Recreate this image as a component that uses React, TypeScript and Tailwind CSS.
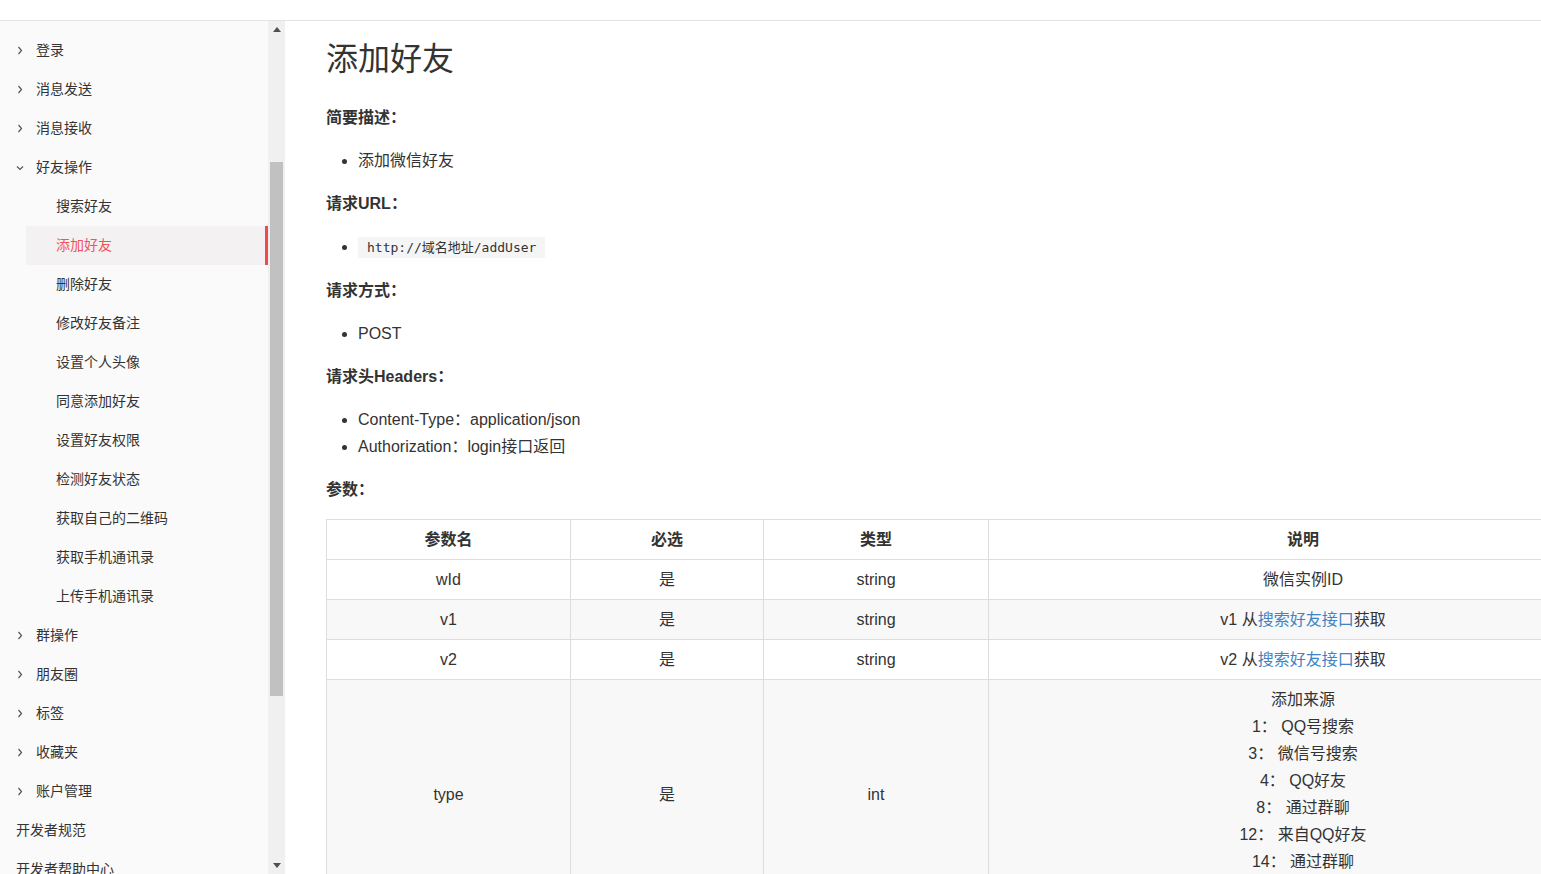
const FONT = { fontFamily: '"Liberation Sans", "Noto Sans CJK SC", sans-serif' };

type NavItem = { label: string; kind: "group" | "open" | "sub" | "active" | "leaf" };

const NAV: NavItem[] = [
  { label: "登录", kind: "group" },
  { label: "消息发送", kind: "group" },
  { label: "消息接收", kind: "group" },
  { label: "好友操作", kind: "open" },
  { label: "搜索好友", kind: "sub" },
  { label: "添加好友", kind: "active" },
  { label: "删除好友", kind: "sub" },
  { label: "修改好友备注", kind: "sub" },
  { label: "设置个人头像", kind: "sub" },
  { label: "同意添加好友", kind: "sub" },
  { label: "设置好友权限", kind: "sub" },
  { label: "检测好友状态", kind: "sub" },
  { label: "获取自己的二维码", kind: "sub" },
  { label: "获取手机通讯录", kind: "sub" },
  { label: "上传手机通讯录", kind: "sub" },
  { label: "群操作", kind: "group" },
  { label: "朋友圈", kind: "group" },
  { label: "标签", kind: "group" },
  { label: "收藏夹", kind: "group" },
  { label: "账户管理", kind: "group" },
  { label: "开发者规范", kind: "leaf" },
  { label: "开发者帮助中心", kind: "leaf" },
];

const Caret = ({ open }: { open: boolean }) =>
  open ? (
    <svg width="8" height="6" viewBox="0 0 8 6">
      <polyline points="1,1.5 4,4.5 7,1.5" fill="none" stroke="#555" strokeWidth="1.2" />
    </svg>
  ) : (
    <svg width="6" height="9" viewBox="0 0 6 9">
      <polyline points="1.5,1 4.5,4.5 1.5,8" fill="none" stroke="#555" strokeWidth="1.2" />
    </svg>
  );

const NavRow = ({ item }: { item: NavItem }) => {
  if (item.kind === "sub" || item.kind === "active") {
    const active = item.kind === "active";
    return (
      <div
        className={
          active
            ? "ml-[26px] flex h-[39px] items-center border-r-[3px] border-[#f04a4f] bg-[#f3f1f1] pl-[30px] text-[#f2545b]"
            : "ml-[26px] flex h-[39px] items-center pl-[30px] text-[#333]"
        }
      >
        {item.label}
      </div>
    );
  }
  if (item.kind === "leaf") {
    return <div className="flex h-[39px] items-center whitespace-nowrap pl-[16px] text-[#333]">{item.label}</div>;
  }
  return (
    <div className="flex h-[39px] items-center pl-[15px] text-[#333]">
      <span className="mr-[11px] flex w-[10px] justify-center">
        <Caret open={item.kind === "open"} />
      </span>
      {item.label}
    </div>
  );
};

const Sidebar = () => (
  <aside className="flex h-full w-[285px] shrink-0">
    <nav className="w-[268px] overflow-hidden bg-[#fafafa] pt-[10px] text-[14px]">
      {NAV.map((item) => (
        <NavRow key={item.label} item={item} />
      ))}
    </nav>
    {/* fake scrollbar */}
    <div className="flex w-[17px] flex-col items-center bg-[#f0f0f0]">
      <div className="flex h-[17px] items-center justify-center">
        <svg width="8" height="5" viewBox="0 0 8 5">
          <path d="M0 5 L4 0 L8 5 Z" fill="#505050" />
        </svg>
      </div>
      <div className="mt-[124px] h-[534px] w-[13px] bg-[#c1c1c1]" />
      <div className="flex-1" />
      <div className="flex h-[17px] items-center justify-center">
        <svg width="8" height="5" viewBox="0 0 8 5">
          <path d="M0 0 L4 5 L8 0 Z" fill="#505050" />
        </svg>
      </div>
    </div>
  </aside>
);

const Heading = ({ children }: { children: React.ReactNode }) => (
  <p className="text-[16px] font-bold leading-[27px] text-[#333]">{children}</p>
);

const Bullets = ({ children }: { children: React.ReactNode }) => (
  <ul className="my-[16px] list-disc pl-[32px] text-[16px] leading-[27px] text-[#333]">{children}</ul>
);

const Link = ({ children }: { children: React.ReactNode }) => (
  <span className="text-[#4183c4]">{children}</span>
);

const SOURCES = ["添加来源", "1： QQ号搜索", "3： 微信号搜索", "4： QQ好友", "8： 通过群聊", "12： 来自QQ好友", "14： 通过群聊"];

const cell = "border border-[#ddd] px-[13px] py-[6px] text-center align-middle leading-[27px]";

const ParamTable = () => (
  <table className="w-[1292px] table-fixed border-collapse text-[16px] text-[#333]">
    <colgroup>
      <col className="w-[244px]" />
      <col className="w-[193px]" />
      <col className="w-[225px]" />
      <col />
    </colgroup>
    <thead>
      <tr>
        <th className={cell + " font-bold"}>参数名</th>
        <th className={cell + " font-bold"}>必选</th>
        <th className={cell + " font-bold"}>类型</th>
        <th className={cell + " font-bold"}>说明</th>
      </tr>
    </thead>
    <tbody>
      <tr>
        <td className={cell}>wId</td>
        <td className={cell}>是</td>
        <td className={cell}>string</td>
        <td className={cell}>微信实例ID</td>
      </tr>
      <tr className="bg-[#f8f8f8]">
        <td className={cell}>v1</td>
        <td className={cell}>是</td>
        <td className={cell}>string</td>
        <td className={cell}>
          v1 从<Link>搜索好友接口</Link>获取
        </td>
      </tr>
      <tr>
        <td className={cell}>v2</td>
        <td className={cell}>是</td>
        <td className={cell}>string</td>
        <td className={cell}>
          v2 从<Link>搜索好友接口</Link>获取
        </td>
      </tr>
      <tr className="bg-[#f8f8f8]">
        <td className={cell}>type</td>
        <td className={cell}>是</td>
        <td className={cell}>int</td>
        <td className={cell + " !pb-[33px]"}>
          {SOURCES.map((s) => (
            <div key={s}>{s}</div>
          ))}
        </td>
      </tr>
    </tbody>
  </table>
);

export default function App() {
  return (
    <div className="flex h-[874px] w-full flex-col overflow-hidden bg-white" style={FONT}>
      <header className="h-[21px] shrink-0 border-b border-[#e3e3e3] bg-white" />
      <div className="flex min-h-0 flex-1">
        <Sidebar />
        <main className="min-w-0 flex-1 overflow-hidden pl-[41px] pt-[18px]">
          <h1 className="mb-[25px] text-[32px] font-normal leading-[40px] text-[#333]">添加好友</h1>
          <Heading>简要描述：</Heading>
          <Bullets>
            <li>添加微信好友</li>
          </Bullets>
          <Heading>请求URL：</Heading>
          <Bullets>
            <li>
              <code
                className="bg-[#f5f5f5] px-[9px] py-[3px] text-[13px] text-[#333]"
                style={{ fontFamily: '"DejaVu Sans Mono", "Noto Sans CJK SC", monospace' }}
              >
                http://域名地址/addUser
              </code>
            </li>
          </Bullets>
          <Heading>请求方式：</Heading>
          <Bullets>
            <li>POST</li>
          </Bullets>
          <Heading>请求头Headers：</Heading>
          <Bullets>
            <li>Content-Type：application/json</li>
            <li>Authorization：login接口返回</li>
          </Bullets>
          <p className="mb-[16px] text-[16px] font-bold leading-[27px] text-[#333]">参数：</p>
          <ParamTable />
        </main>
      </div>
    </div>
  );
}
